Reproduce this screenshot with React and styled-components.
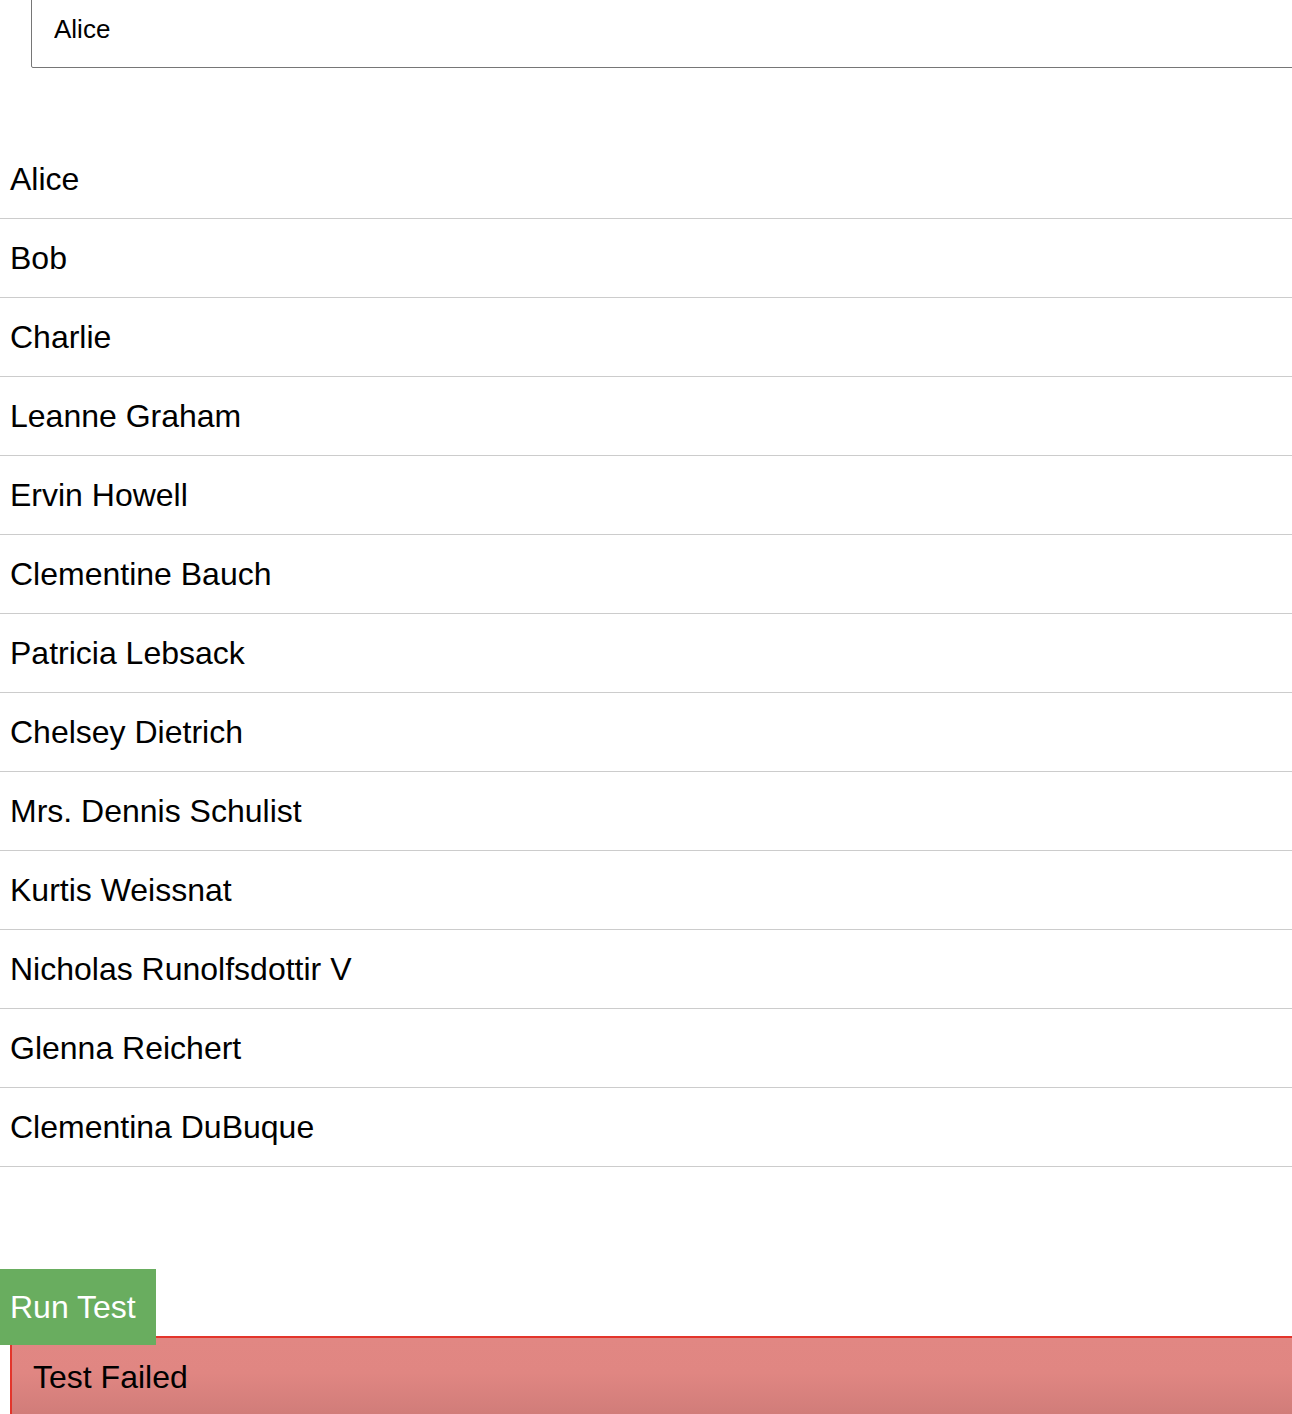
import React from "react";
import styled, { createGlobalStyle } from "styled-components";

const Global = createGlobalStyle`
  html, body {
    margin: 0;
    padding: 0;
    background: #ffffff;
    overflow: hidden;
  }
  body {
    font-family: "Liberation Sans", Arial, sans-serif;
    color: #000;
  }
`;

const Page = styled.div`
  display: flex;
  flex-direction: column;
  width: 1292px;
  overflow: hidden;

  & > * {
    flex-shrink: 0;
  }
`;

const SearchInput = styled.input`
  box-sizing: border-box;
  margin: -10px 0 0 31px;
  width: 1400px;
  height: 78px;
  padding: 0 22px;
  border: 1px solid #767676;
  border-radius: 2px;
  font-family: "Liberation Sans", Arial, sans-serif;
  font-size: 26px;
  color: #000;
  background: #fff;
  outline: none;
`;

const List = styled.ul`
  list-style: none;
  margin: 72px 0 0 0;
  padding: 0;
`;

const Row = styled.li`
  padding: 20px 10px;
  font-size: 32px;
  line-height: 38px;
  border-bottom: 1px solid #cccccc;
`;

const Footer = styled.div`
  display: flex;
  flex-direction: column;
  align-items: flex-start;
  margin-top: 102px;
`;

const RunButton = styled.button`
  position: relative;
  z-index: 1;
  box-sizing: border-box;
  height: 76px;
  width: 156px;
  padding: 0 10px;
  text-align: left;
  border: none;
  background: #69ad5f;
  color: #ffffff;
  font-family: "Liberation Sans", Arial, sans-serif;
  font-size: 32px;
  cursor: pointer;
`;

const Result = styled.div`
  box-sizing: border-box;
  margin: -9px 0 0 10px;
  width: 1400px;
  padding: 20px 21px;
  font-size: 32px;
  line-height: 38px;
  border-top: 2px solid ${(p) => (p.$passed ? "#2e7d32" : "#e3352b")};
  border-left: 2px solid ${(p) => (p.$passed ? "#2e7d32" : "#e3352b")};
  background: ${(p) =>
    p.$passed
      ? "#a5d6a7"
      : "linear-gradient(180deg, #e18783 0%, #e08682 45%, #d07c79 100%)"};
  color: #000;
`;

const names = [
  "Alice",
  "Bob",
  "Charlie",
  "Leanne Graham",
  "Ervin Howell",
  "Clementine Bauch",
  "Patricia Lebsack",
  "Chelsey Dietrich",
  "Mrs. Dennis Schulist",
  "Kurtis Weissnat",
  "Nicholas Runolfsdottir V",
  "Glenna Reichert",
  "Clementina DuBuque",
];

export default function App() {
  return (
    <>
      <Global />
      <Page>
        <SearchInput defaultValue="Alice" />
        <List>
          {names.map((n) => (
            <Row key={n}>{n}</Row>
          ))}
        </List>
        <Footer>
          <RunButton>Run Test</RunButton>
          <Result $passed={false}>Test Failed</Result>
        </Footer>
      </Page>
    </>
  );
}
